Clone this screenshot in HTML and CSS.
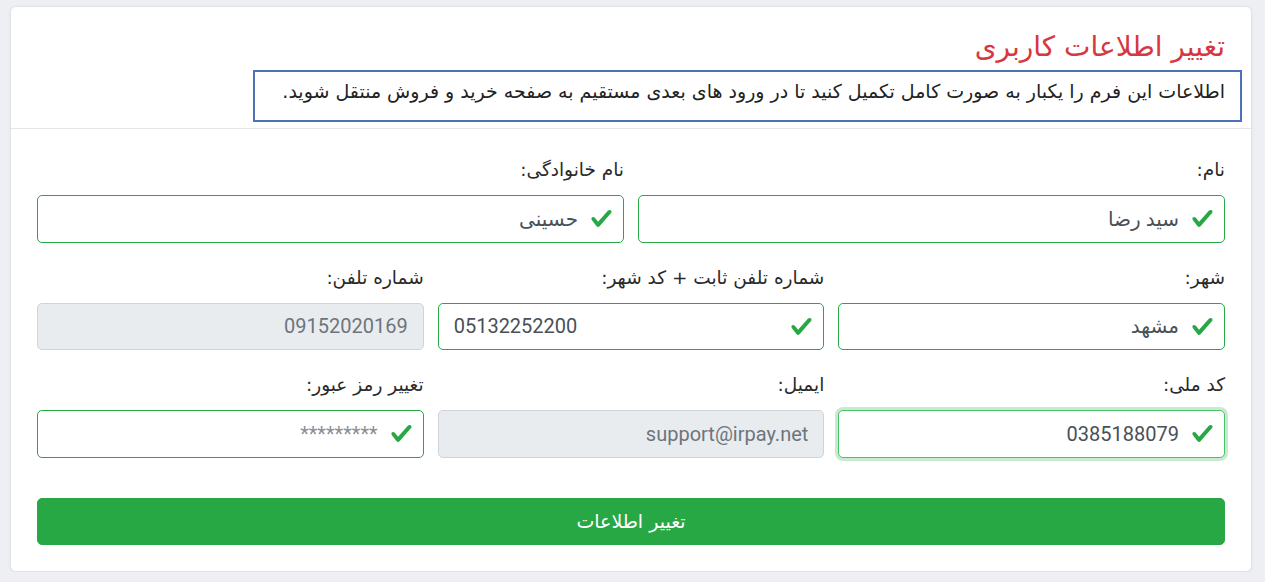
FILE: index.html
```html
<!DOCTYPE html>
<html lang="fa" dir="rtl">
<head>
<meta charset="utf-8">
<title>تغییر اطلاعات کاربری</title>
<link rel="stylesheet" href="styles.css">
</head>
<body>
<div class="card">
  <div class="card-header">
    <h1 class="title">تغییر اطلاعات کاربری</h1>
    <div class="notice">اطلاعات این فرم را یکبار به صورت کامل تکمیل کنید تا در ورود های بعدی مستقیم به صفحه خرید و فروش منتقل شوید.</div>
  </div>
  <form class="card-body">
    <div class="row cols-2">
      <div class="group">
        <label class="label">نام:</label>
        <div class="field">
          <input class="input valid" type="text" value="سید رضا">
          <svg class="check" viewBox="0 0 8 8"><path d="M2.3 6.73L.6 4.53c-.4-1.04.46-1.4 1.1-.8l1.1 1.4 3.4-3.8c.6-.63 1.6-.27 1.2.7l-4 4.6c-.43.5-.8.4-1.1.1z"/></svg>
        </div>
      </div>
      <div class="group">
        <label class="label">نام خانوادگی:</label>
        <div class="field">
          <input class="input valid" type="text" value="حسینی">
          <svg class="check" viewBox="0 0 8 8"><path d="M2.3 6.73L.6 4.53c-.4-1.04.46-1.4 1.1-.8l1.1 1.4 3.4-3.8c.6-.63 1.6-.27 1.2.7l-4 4.6c-.43.5-.8.4-1.1.1z"/></svg>
        </div>
      </div>
    </div>
    <div class="row cols-3">
      <div class="group">
        <label class="label">شهر:</label>
        <div class="field">
          <input class="input valid" type="text" value="مشهد">
          <svg class="check" viewBox="0 0 8 8"><path d="M2.3 6.73L.6 4.53c-.4-1.04.46-1.4 1.1-.8l1.1 1.4 3.4-3.8c.6-.63 1.6-.27 1.2.7l-4 4.6c-.43.5-.8.4-1.1.1z"/></svg>
        </div>
      </div>
      <div class="group">
        <label class="label">شماره تلفن ثابت + کد شهر:</label>
        <div class="field">
          <input class="input valid ltr" type="text" dir="ltr" value="05132252200">
          <svg class="check" viewBox="0 0 8 8"><path d="M2.3 6.73L.6 4.53c-.4-1.04.46-1.4 1.1-.8l1.1 1.4 3.4-3.8c.6-.63 1.6-.27 1.2.7l-4 4.6c-.43.5-.8.4-1.1.1z"/></svg>
        </div>
      </div>
      <div class="group">
        <label class="label">شماره تلفن:</label>
        <div class="field">
          <input class="input" type="text" value="09152020169" disabled>
        </div>
      </div>
    </div>
    <div class="row cols-3">
      <div class="group">
        <label class="label">کد ملی:</label>
        <div class="field">
          <input class="input valid focused" type="text" value="0385188079" autofocus>
          <svg class="check" viewBox="0 0 8 8"><path d="M2.3 6.73L.6 4.53c-.4-1.04.46-1.4 1.1-.8l1.1 1.4 3.4-3.8c.6-.63 1.6-.27 1.2.7l-4 4.6c-.43.5-.8.4-1.1.1z"/></svg>
        </div>
      </div>
      <div class="group">
        <label class="label">ایمیل:</label>
        <div class="field">
          <input class="input" type="text" value="support@irpay.net" disabled>
        </div>
      </div>
      <div class="group">
        <label class="label">تغییر رمز عبور:</label>
        <div class="field">
          <input class="input valid" type="password" placeholder="*********">
          <svg class="check" viewBox="0 0 8 8"><path d="M2.3 6.73L.6 4.53c-.4-1.04.46-1.4 1.1-.8l1.1 1.4 3.4-3.8c.6-.63 1.6-.27 1.2.7l-4 4.6c-.43.5-.8.4-1.1.1z"/></svg>
        </div>
      </div>
    </div>
    <button class="submit" type="button">تغییر اطلاعات</button>
  </form>
</div>
</body>
</html>
```
FILE: styles.css
```css
* { box-sizing: border-box; }
html, body { margin: 0; padding: 0; }
body {
  background: #eeeff2;
  font-family: Roboto, "DejaVu Sans", sans-serif;
  color: #212529;
  font-size: 18px;
}
.card {
  margin: 6px 13px 0 10px;
  background: #fff;
  border: 1px solid #e2e3e6;
  border-radius: 6px;
  box-shadow: 0 1px 3px rgba(0,0,0,0.06);
}
.card-header {
  padding: 24px 9px 6px;
  border-bottom: 1px solid #e6e6e6;
}
.title {
  margin: 0 0 8px;
  padding-right: 17px;
  font-size: 28px;
  line-height: 31px;
  font-weight: normal;
  color: #d7373f;
  font-family: "DejaVu Sans", sans-serif;
}
.notice {
  width: 989px;
  border: 2px solid #4d72b5;
  padding: 4px 15px 14px;
  font-size: 19px;
  line-height: 30px;
  color: #222;
  font-family: "DejaVu Sans", sans-serif;
}
.card-body {
  padding: 26px 26px 26px;
  margin: 0;
}
.row {
  display: grid;
  gap: 14px;
  margin-bottom: 20px;
}
.cols-2 { grid-template-columns: 1fr 1fr; }
.cols-3 { grid-template-columns: 1fr 1fr 1fr; }
.group { display: flex; flex-direction: column; }
.label {
  font-family: "DejaVu Sans", sans-serif;
  font-size: 18.5px;
  line-height: 30px;
  margin-bottom: 10px;
  color: #2a2a2a;
}
.field { position: relative; }
.input {
  display: block;
  width: 100%;
  height: 47.5px;
  padding: 7px 15px;
  font-family: Roboto, "DejaVu Sans", sans-serif;
  font-size: 20px;
  color: #495057;
  background: #fff;
  border: 1px solid #ced4da;
  border-radius: 5px;
  text-align: right;
  outline: none;
}
.input.valid {
  border-color: #28a745;
  padding-right: 45px;
}
.input.ltr {
  text-align: left;
  padding-left: 15px;
}
.input:disabled {
  background: #e9ecef;
  border-color: #ced4da;
  color: #6c757d;
}
.input::placeholder { color: #8a8f95; font-size: 20px; }
.input.focused {
  border-color: #49c465;
  box-shadow: 0 0 0 3px rgba(40,167,69,0.25);
}
.check {
  position: absolute;
  right: 11px;
  top: 12px;
  width: 23px;
  height: 23px;
  fill: #28a745;
}
.submit {
  display: block;
  width: 100%;
  height: 47px;
  margin-top: 40px;
  background: #28a745;
  border: 1px solid #28a745;
  border-radius: 5px;
  color: #fff;
  font-family: "DejaVu Sans", sans-serif;
  font-size: 19px;
}
```
